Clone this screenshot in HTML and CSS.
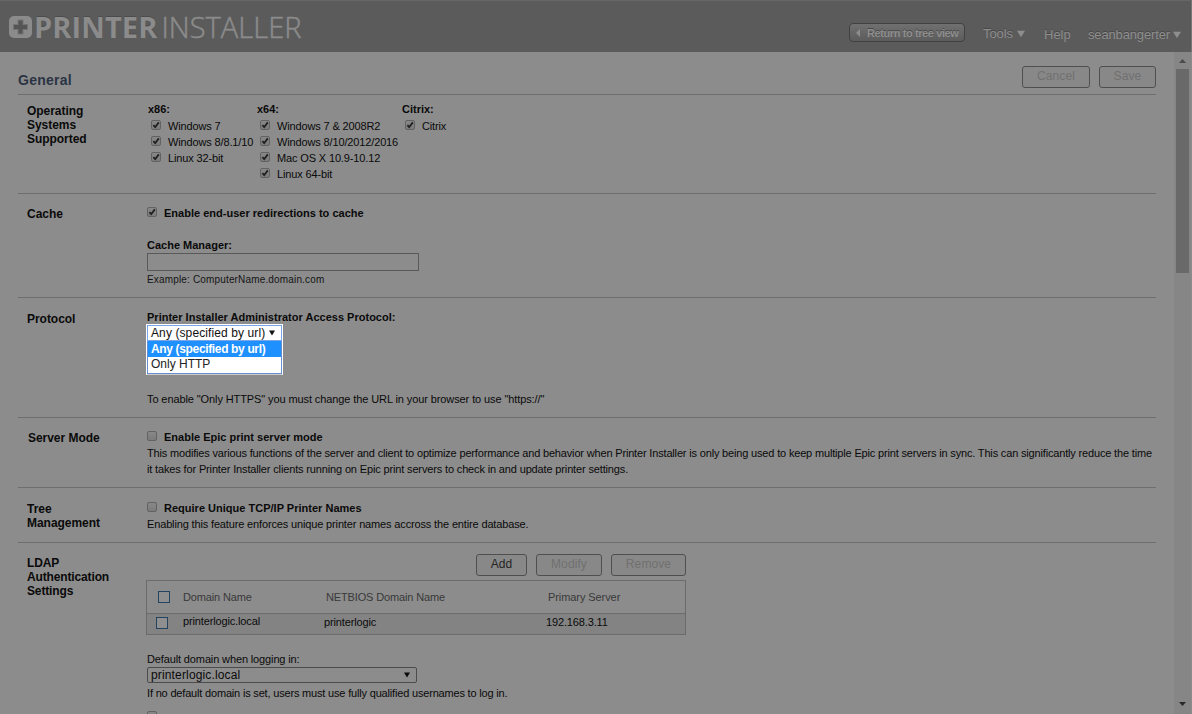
FILE: index.html
```
<!DOCTYPE html>
<html lang="en">
<head>
<meta charset="utf-8">
<title>Printer Installer</title>
<link rel="stylesheet" href="styles.css">
</head>
<body>
<svg class="defs" width="0" height="0"><symbol id="tick" viewBox="0 0 10 10"><path d="M2.4 5.2 4.2 7.2 7.8 2.4" fill="none" stroke="#202020" stroke-width="1.8"/></symbol>
<symbol id="down" viewBox="0 0 6 6"><path d="M0 .5h6L3 5.5z" fill="currentColor"/></symbol></svg>
<div class="app">
  <header class="topbar">
    <div class="logo">
      <svg class="logo-mark" viewBox="0 0 23 22"><rect width="23" height="22" rx="5" fill="#8b8b8b"/><path d="M8.500 3.500h6V8H19v6h-4.500v4.500h-6V14H4V8h4.500z" fill="#747474"/><path d="M9.500 4.500h4V9H18v4h-4.500v4.500h-4V13H5V9h4.500z" fill="#555"/></svg>
      <span class="logo-bold">PRINTER</span><span class="logo-light">INSTALLER</span>
    </div>
    <nav class="nav">
      <a class="return"><svg width="4" height="8" viewBox="0 0 4 8"><path d="M4 0v8L0 4z" fill="#8c8c8c"/></svg><span>Return to tree view</span></a>
      <a class="menu tools">Tools <svg width="8" height="8"><use href="#down"/></svg></a>
      <a class="menu help">Help</a>
      <a class="menu user">seanbangerter <svg width="8" height="8"><use href="#down"/></svg></a>
    </nav>
  </header>
  <div class="body">
    <main class="page">
      <div class="title-row"><h1>General</h1><div class="actions"><button class="btn off cancel">Cancel</button><button class="btn off save">Save</button></div></div>

      <section class="section os">
        <h2>Operating<br>Systems<br>Supported</h2>
        <div class="content os-grid">
          <div class="os-col"><b>x86:</b>
            <label><i class="cb"><svg><use href="#tick"/></svg></i><span>Windows 7</span></label>
            <label><i class="cb"><svg><use href="#tick"/></svg></i><span>Windows 8/8.1/10</span></label>
            <label><i class="cb"><svg><use href="#tick"/></svg></i><span>Linux 32-bit</span></label></div>
          <div class="os-col wide"><b>x64:</b>
            <label><i class="cb"><svg><use href="#tick"/></svg></i><span>Windows 7 &amp; 2008R2</span></label>
            <label><i class="cb"><svg><use href="#tick"/></svg></i><span>Windows 8/10/2012/2016</span></label>
            <label><i class="cb"><svg><use href="#tick"/></svg></i><span>Mac OS X 10.9-10.12</span></label>
            <label><i class="cb"><svg><use href="#tick"/></svg></i><span>Linux 64-bit</span></label></div>
          <div class="os-col"><b>Citrix:</b>
            <label><i class="cb"><svg><use href="#tick"/></svg></i><span>Citrix</span></label></div>
        </div>
      </section>

      <section class="section cache">
        <h2>Cache</h2>
        <div class="content">
          <label class="check"><i class="cb"><svg><use href="#tick"/></svg></i><b>Enable end-user redirections to cache</b></label>
          <b class="line field-title">Cache Manager:</b>
          <div class="input"></div>
          <div class="example">Example: ComputerName.domain.com</div>
        </div>
      </section>

      <section class="section protocol">
        <h2>Protocol</h2>
        <div class="content">
          <b class="line access">Printer Installer Administrator Access Protocol:</b>
          <div class="dropdown">
            <div class="chosen"><span>Any (specified by url)</span><svg width="6" height="6"><use href="#down"/></svg></div>
            <div class="option selected"><span>Any (specified by url)</span></div>
            <div class="option"><span>Only HTTP</span></div>
          </div>
          <p class="note">To enable "Only HTTPS" you must change the URL in your browser to use "https://"</p>
        </div>
      </section>

      <section class="section server">
        <h2>Server Mode</h2>
        <div class="content">
          <label class="check"><i class="cb"></i><b>Enable Epic print server mode</b></label>
          <p class="long wide-line">This modifies various functions of the server and client to optimize performance and behavior when Printer Installer is only being used to keep multiple Epic print servers in sync. This can significantly reduce the time</p>
          <p class="long">it takes for Printer Installer clients running on Epic print servers to check in and update printer settings.</p>
        </div>
      </section>

      <section class="section tree">
        <h2>Tree<br>Management</h2>
        <div class="content">
          <label class="check"><i class="cb"></i><b>Require Unique TCP/IP Printer Names</b></label>
          <p class="long">Enabling this feature enforces unique printer names accross the entire database.</p>
        </div>
      </section>

      <section class="section ldap">
        <h2>LDAP<br>Authentication<br>Settings</h2>
        <div class="content">
          <div class="table-actions"><button class="btn add">Add</button><button class="btn off modify">Modify</button><button class="btn off remove">Remove</button></div>
          <div class="table">
            <div class="tr head"><i class="box"></i><span class="c1">Domain Name</span><span class="c2">NETBIOS Domain Name</span><span class="c3">Primary Server</span></div>
            <div class="tr row"><i class="box"></i><span class="c1">printerlogic.local</span><span class="c2">printerlogic</span><span class="c3">192.168.3.11</span></div>
          </div>
          <p class="default">Default domain when logging in:</p>
          <div class="select"><span>printerlogic.local</span><svg width="6" height="6"><use href="#down"/></svg></div>
          <p class="hint">If no default domain is set, users must use fully qualified usernames to log in.</p>
          <i class="cb last"></i>
        </div>
      </section>
    </main>
    <div class="scrollbar"><svg width="7" height="4" viewBox="0 0 7 4"><path d="M0 4h7L3.500 0z" fill="#4b4b4b"/></svg><div class="thumb"></div><svg class="arrow-down" width="7" height="4" viewBox="0 0 7 4"><path d="M0 0h7L3.500 4z" fill="#282828"/></svg></div>
  </div>
</div>
</body>
</html>
```
FILE: styles.css
```
* { box-sizing: border-box; }
body { margin: 0; background: #8c8c8c; color: #0a0a0a; font: 11px/16px "Liberation Sans", Arial, sans-serif; }
svg { display: block; flex: none; }
.defs { position: absolute; }
p, h1, h2 { margin: 0; }
p, b, span { white-space: nowrap; }
.app { width: 1192px; height: 714px; overflow: hidden; display: flex; flex-direction: column; }

.topbar { height: 52px; flex: none; display: flex; justify-content: space-between; background: #5b5b5b; border-top: 1px solid #666; border-right: 1px solid #777; }
.logo { display: flex; padding: 15px 0 0 9px; color: #8b8b8b; font: 29px/22px "Open Sans", sans-serif; text-shadow: 0 -1px 0 #4c4c4c; }
.logo-mark { width: 23px; height: 22px; }
.logo-bold { font-weight: 700; margin-left: 2px; letter-spacing: .1px; }
.logo-light { font-weight: 300; margin-left: 4px; letter-spacing: .05px; -webkit-text-stroke: .5px #8b8b8b; text-shadow: none; }
.nav { display: flex; color: #8e8e8e; font-size: 13px; text-shadow: 0 -1px 0 #474747; }
.return { display: flex; align-items: center; width: 116px; height: 19px; margin: 22px 18px 0 0; padding-left: 6px; gap: 7px; border: 1px solid #414141; border-radius: 4px; background: linear-gradient(#707070, #5c5c5c); font-size: 11px; font-weight: 700; letter-spacing: -.4px; }
.menu { display: flex; gap: 3px; align-items: center; height: 16px; margin-top: 25px; }
.tools { width: 61px; letter-spacing: -.1px; gap: 4px; }
.help { width: 44px; margin-top: 26px; }
.user { width: 103px; margin-top: 26px; letter-spacing: -.15px; }

.body { flex: 1; display: flex; min-height: 0; }
.page { width: 1174px; padding: 0 18px; }
.title-row { height: 43px; display: flex; justify-content: space-between; border-bottom: 1px solid #6e6e6e; }
h1 { padding-top: 19px; font-size: 14px; line-height: 18px; color: #2b3444; letter-spacing: .25px; }
.actions { display: flex; gap: 9px; padding-top: 14px; }
.btn { height: 22px; padding: 0 0 2px; border: 1px solid #4f4f4f; border-radius: 3px; background: #888; color: #242424; font: 12px/18px "Liberation Sans", Arial, sans-serif; letter-spacing: .1px; }
.off { color: #707070; }
.cancel { width: 68px; }
.save { width: 57px; }

.section { display: flex; border-bottom: 1px solid #6e6e6e; padding-left: 9px; }
h2 { width: 120px; flex: none; padding-top: 9px; font-size: 12px; line-height: 14px; letter-spacing: -.04px; }
.content { flex: 1; min-width: 0; }
.line { display: block; }
.os { height: 99px; }
.os .content { padding: 7px 0 0 1px; display: flex; }
.os-col { width: 109px; }
.os-col b { display: block; height: 16px; line-height: 15px; }
.os-col.wide { width: 145px; }
.os-col label { display: flex; height: 16px; padding-left: 3px; gap: 7px; letter-spacing: -.14px; }
.cb { display: block; flex: none; width: 10px; height: 10px; margin-top: 2px; border: 1px solid #626262; border-radius: 2px; background: linear-gradient(#888, #7b7b7b); }
.cb svg { width: 10px; height: 10px; margin: -1px; }
.check { display: flex; height: 16px; gap: 7px; letter-spacing: .01px; }

.cache { height: 104px; }
.cache h2 { padding-top: 13px; }
.cache .content { padding-top: 11px; }
.field-title { margin-top: 16px; }
.input { width: 272px; height: 18px; border: 1px solid #595959; background: #8c8c8c; }
.example { font-size: 10px; line-height: 18px; letter-spacing: .16px; color: #141414; }

.protocol { height: 120px; }
.protocol h2 { padding-top: 14px; }
.protocol .content { padding-top: 11px; }
.access { letter-spacing: .01px; }
.dropdown { width: 137px; height: 51px; margin: -1px 0 0 -1px; background: #fff; border: 1px solid #fff; border-bottom-color: #ccc; font-size: 12px; color: #222; }
.chosen { height: 16px; display: flex; align-items: center; gap: 4px; padding-left: 3px; border: 1px solid #7aa5e8; color: #111; letter-spacing: .1px; }
.option { height: 15px; line-height: 15px; padding-left: 3px; border: 0 solid #668fd1; border-width: 0 1px; }
.option:last-child { height: 17px; border-bottom-width: 1px; }
.option.selected { height: 16px; line-height: 17px; background: #1e90ff; color: #fff; font-weight: 700; letter-spacing: -.35px; }
.note { margin-top: 16px; letter-spacing: -.1px; }

.server { height: 70px; }
.server h2 { padding: 13px 0 0 1px; }
.server .content { padding-top: 11px; }
.long { letter-spacing: -.147px; }
.wide-line { letter-spacing: -.168px; }
.tree { height: 55px; }
.tree h2 { padding-top: 14px; }
.tree .content { padding-top: 12px; }

.ldap { border: 0; height: 171px; }
.ldap h2 { padding-top: 13px; letter-spacing: -.14px; }
.ldap .content { padding-top: 11px; }
.table-actions { display: flex; gap: 9px; width: 539px; justify-content: flex-end; }
.add { width: 51px; }
.modify { width: 66px; }
.remove { width: 75px; }
.table { width: 540px; height: 55px; margin: 4px 0 0 -1px; border: 1px solid #6b6b6b; }
.tr { display: flex; letter-spacing: -.14px; }
.head { height: 33px; padding: 10px 0 0 11px; color: #393939; border-bottom: 1px solid #6b6b6b; line-height: 12px; }
.head .c3 { letter-spacing: -.08px; }
.row { height: 20px; padding: 3px 0 0 9px; background: #838383; line-height: 10px; }
.box { width: 12px; height: 12px; flex: none; border: 1px solid #234360; background: #8f8f8f; }
.head .c1 { margin-left: 13px; width: 143px; }
.row .c1 { margin-left: 15px; width: 141px; line-height: 8px; }
.c2 { width: 222px; }
.default { margin-top: 16px; letter-spacing: -.13px; }
.select { display: flex; align-items: center; justify-content: space-between; width: 270px; height: 16px; padding: 0 6px 0 3px; border: 1px solid #4c4c4c; border-radius: 2px; font-size: 12px; letter-spacing: .15px; }
.hint { margin-top: 2px; letter-spacing: -.18px; }
.last { margin-top: 10px; }

.scrollbar { width: 18px; display: flex; flex-direction: column; align-items: center; background: #868686; border-right: 1px solid #8c8c8c; padding: 7px 0 8px; }
.thumb { width: 13px; height: 204px; margin-top: 6px; background: #696969; }
.arrow-down { margin-top: auto; }
```
